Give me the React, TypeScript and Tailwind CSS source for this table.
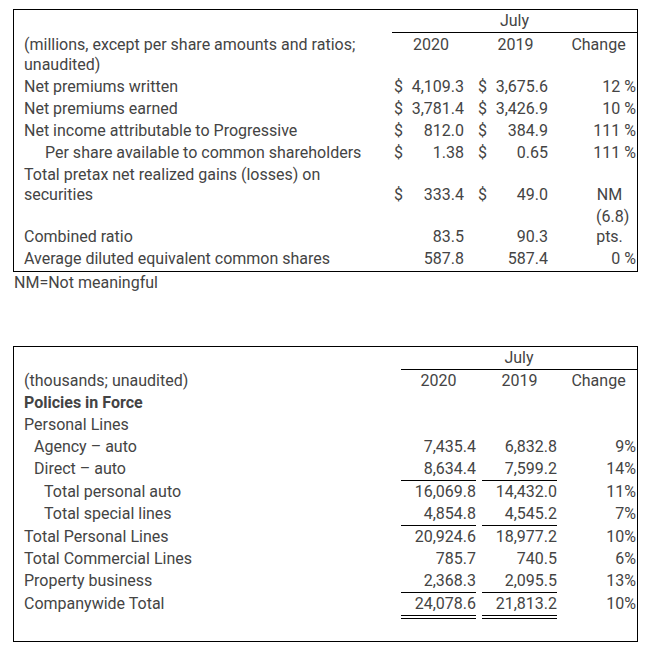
import React from 'react';

type Row1 = {
  label: string;
  indent?: boolean;
  d1?: boolean;
  v1: string;
  d2?: boolean;
  v2: string;
  change: React.ReactNode;
};

const summaryRows: Row1[] = [
  { label: 'Net premiums written', d1: true, v1: '4,109.3', d2: true, v2: '3,675.6', change: '12 %' },
  { label: 'Net premiums earned', d1: true, v1: '3,781.4', d2: true, v2: '3,426.9', change: '10 %' },
  { label: 'Net income attributable to Progressive', d1: true, v1: '812.0', d2: true, v2: '384.9', change: '111 %' },
  { label: 'Per share available to common shareholders', indent: true, d1: true, v1: '1.38', d2: true, v2: '0.65', change: '111 %' },
  {
    label: 'Total pretax net realized gains (losses) on securities',
    d1: true,
    v1: '333.4',
    d2: true,
    v2: '49.0',
    change: (
      <div className="flex justify-end pr-[13px]">
        <div className="w-[27px] text-center">NM</div>
      </div>
    ),
  },
  {
    label: 'Combined ratio',
    v1: '83.5',
    v2: '90.3',
    change: (
      <div className="flex justify-end pr-[13px]">
        <div className="w-[27px] text-center">(6.8) pts.</div>
      </div>
    ),
  },
  { label: 'Average diluted equivalent common shares', v1: '587.8', v2: '587.4', change: '0 %' },
];

type Row2 = {
  label: string;
  indent?: 0 | 1 | 2;
  bold?: boolean;
  v1?: string;
  v2?: string;
  change?: string;
  line?: 'single' | 'double';
};

const policyRows: Row2[] = [
  { label: 'Policies in Force', bold: true },
  { label: 'Personal Lines' },
  { label: 'Agency – auto', indent: 1, v1: '7,435.4', v2: '6,832.8', change: '9%' },
  { label: 'Direct – auto', indent: 1, v1: '8,634.4', v2: '7,599.2', change: '14%', line: 'single' },
  { label: 'Total personal auto', indent: 2, v1: '16,069.8', v2: '14,432.0', change: '11%' },
  { label: 'Total special lines', indent: 2, v1: '4,854.8', v2: '4,545.2', change: '7%', line: 'single' },
  { label: 'Total Personal Lines', v1: '20,924.6', v2: '18,977.2', change: '10%' },
  { label: 'Total Commercial Lines', v1: '785.7', v2: '740.5', change: '6%' },
  { label: 'Property business', v1: '2,368.3', v2: '2,095.5', change: '13%', line: 'single' },
  { label: 'Companywide Total', v1: '24,078.6', v2: '21,813.2', change: '10%', line: 'double' },
];

const cell = 'py-[1px] leading-[20px] align-bottom';
const head = 'pt-[2px] pb-[1px] leading-[20px] align-top';

const SummaryTable: React.FC = () => (
  <div className="w-[625px] border border-black">
    <table className="w-full table-fixed border-collapse">
      <colgroup>
        <col className="w-[378px]" />
        <col className="w-[78px]" />
        <col className="w-[90px]" />
        <col className="w-[77px]" />
      </colgroup>
      <tbody>
        <tr>
          <td className={cell}></td>
          <td colSpan={3} className="py-[1px] leading-[20px] text-center border-b border-black">
            July
          </td>
        </tr>
        <tr>
          <td className={`${head} pl-[10px] pr-[8px]`}>
            (millions, except per share amounts and ratios; unaudited)
          </td>
          <td className={`${head} text-center px-[6px]`}>2020</td>
          <td className={`${head} text-center pl-[13px] pr-[12px]`}>2019</td>
          <td className={`${head} text-center`}>Change</td>
        </tr>
        {summaryRows.map((r) => (
          <tr key={r.label}>
            <td className={`${cell} pr-[8px] ${r.indent ? 'pl-[31px]' : 'pl-[10px]'}`}>{r.label}</td>
            <td className={`${cell} pl-[2px] pr-[6px]`}>
              <div className="flex justify-between">
                <span>{r.d1 ? '$' : ''}</span>
                <span>{r.v1}</span>
              </div>
            </td>
            <td className={`${cell} pl-[8px] pr-[12px]`}>
              <div className="flex justify-between">
                <span>{r.d2 ? '$' : ''}</span>
                <span>{r.v2}</span>
              </div>
            </td>
            <td className={`${cell} text-right pr-[1px]`}>{r.change}</td>
          </tr>
        ))}
        <tr>
          <td colSpan={4} className="h-[1px]"></td>
        </tr>
      </tbody>
    </table>
  </div>
);

const PolicyTable: React.FC = () => (
  <div className="w-[625px] border border-black">
    <table className="w-full table-fixed border-collapse">
      <colgroup>
        <col className="w-[384px]" />
        <col className="w-[81px]" />
        <col className="w-[81px]" />
        <col className="w-[77px]" />
      </colgroup>
      <tbody>
        <tr>
          <td className={cell}></td>
          <td colSpan={3} className="pl-[3px] leading-[20px]">
            <div className="py-[1px] text-center border-b border-black">July</div>
          </td>
        </tr>
        <tr>
          <td className={`${cell} pl-[10px]`}>(thousands; unaudited)</td>
          <td className={`${cell} text-center px-[3px]`}>2020</td>
          <td className={`${cell} text-center px-[3px]`}>2019</td>
          <td className={`${cell} text-center`}>Change</td>
        </tr>
        {policyRows.map((r) => {
          const pad = r.indent === 2 ? 'pl-[30px]' : r.indent === 1 ? 'pl-[20px]' : 'pl-[10px]';
          const under =
            r.line === 'double'
              ? 'border-b-4 border-double border-black'
              : r.line === 'single'
              ? 'border-b border-black'
              : '';
          return (
            <tr key={r.label}>
              <td className={`py-[1px] leading-[20px] align-top ${pad} ${r.bold ? 'font-bold' : ''}`}>{r.label}</td>
              <td className="px-[3px] leading-[20px] align-top">
                <div className={`py-[1px] text-right ${under}`}>{r.v1 ?? '\u00a0'}</div>
              </td>
              <td className="px-[3px] leading-[20px] align-top">
                <div className={`py-[1px] text-right ${under}`}>{r.v2 ?? '\u00a0'}</div>
              </td>
              <td className="py-[1px] leading-[20px] align-top text-right pr-[1px]">{r.change ?? ''}</td>
            </tr>
          );
        })}
        <tr>
          <td colSpan={4} className="h-[22px]"></td>
        </tr>
      </tbody>
    </table>
  </div>
);

export default function App() {
  return (
    <div
      className="min-h-[652px] w-[662px] bg-white pl-[13px] pt-[9px] text-[16px] text-[#444]"
      style={{ fontFamily: 'Roboto, "Liberation Sans", sans-serif' }}
    >
      <SummaryTable />
      <div className="pl-[1px] leading-[20px] pt-[1px]">NM=Not meaningful</div>
      <div className="mt-[53px]">
        <PolicyTable />
      </div>
    </div>
  );
}
